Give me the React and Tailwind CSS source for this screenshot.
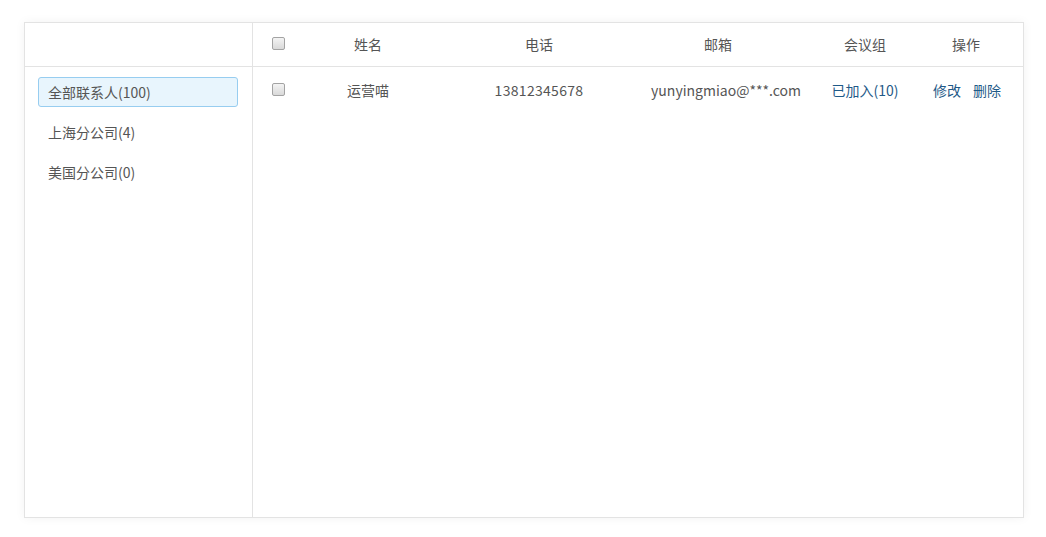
import React, { useState } from "react";

const groups = [
  { name: "全部联系人(100)" },
  { name: "上海分公司(4)" },
  { name: "美国分公司(0)" },
];

const cols = "grid grid-cols-[50px_130px_212px_146px_148px_54px]";

const Check = () => (
  <span className="block w-[13px] h-[13px] rounded-[2px] border border-[#a3a3a3] bg-gradient-to-b from-[#f4f4f4] to-[#d9d9d9]" />
);

const App = () => {
  const [active, setActive] = useState(0);

  return (
    <div
      className="min-h-screen bg-white pt-[22px] pl-[24px] text-[14px] text-[#555]"
      style={{ fontFamily: '"Noto Sans CJK SC", "Noto Sans", sans-serif' }}
    >
      <div className="w-[1000px] h-[496px] flex border border-[#e3e3e3] bg-white shadow-[0_0_10px_rgba(0,0,0,0.05)]">
        {/* groups */}
        <div className="w-[228px] flex flex-col border-r border-[#e3e3e3]">
          <div className="h-[44px] border-b border-[#e3e3e3]" />
          <div className="flex flex-col gap-[10px] pt-[10px] pl-[13px] pr-[14px]">
            {groups.map((g, i) => (
              <div
                key={g.name}
                onClick={() => setActive(i)}
                className={`h-[30px] flex items-center pl-[9px] rounded-[3px] border cursor-pointer ${
                  active === i ? "bg-[#e8f5fd] border-[#97cdf0]" : "border-transparent"
                }`}
              >
                {g.name}
              </div>
            ))}
          </div>
        </div>

        {/* table */}
        <div className="flex-1 flex flex-col">
          <div className={`${cols} h-[44px] items-center border-b border-[#e3e3e3] text-[#555]`}>
            <div className="flex justify-center -mt-[3px]"><Check /></div>
            <div className="text-center">姓名</div>
            <div className="text-center">电话</div>
            <div className="text-center">邮箱</div>
            <div className="text-center">会议组</div>
            <div className="text-center">操作</div>
          </div>
          <div className={`${cols} h-[47px] items-center`}>
            <div className="flex justify-center -mt-[2px]"><Check /></div>
            <div className="text-center">运营喵</div>
            <div className="text-center tracking-[0.3px]">13812345678</div>
            <div className="flex justify-center whitespace-nowrap pl-[16px]">yunyingmiao@***.com</div>
            <div className="text-center text-[#1f5a88] cursor-pointer">已加入(10)</div>
            <div className="flex justify-center gap-[12px] whitespace-nowrap text-[#1f5a88] pl-[2px]">
              <span className="cursor-pointer">修改</span>
              <span className="cursor-pointer">删除</span>
            </div>
          </div>
        </div>
      </div>
    </div>
  );
};

export default App;
